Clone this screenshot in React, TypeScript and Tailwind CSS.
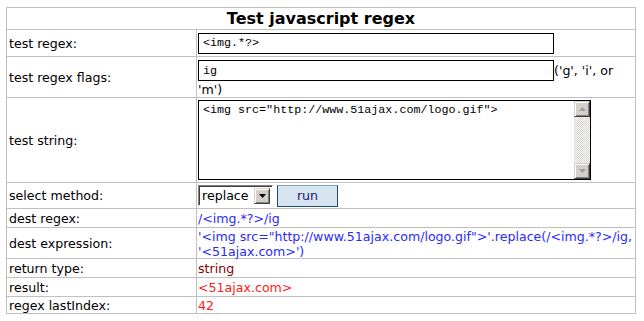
import React from "react"

// classic win-style 3d button face
const bevel =
  "bg-[#d4d0c8] border border-t-[#d4d0c8] border-l-[#d4d0c8] border-r-[#404040] border-b-[#404040] shadow-[inset_1px_1px_0_#fff,inset_-1px_-1px_0_#808080]"

function Row({ label, h, children, valueClass = "" }: { label: string; h: string; children: React.ReactNode; valueClass?: string }) {
  return (
    <div className={`flex ${h}`}>
      <div className="w-[190px] shrink-0 border-r border-b border-[#c0c0c0] flex items-center pl-[2px]">{label}</div>
      <div className={`flex-1 border-r border-b border-[#c0c0c0] pl-[1px] ${valueClass}`}>{children}</div>
    </div>
  )
}

function Arrow({ dir }: { dir: "up" | "down" }) {
  return (
    <div className={`w-[16px] h-[16px] ${bevel} flex items-center justify-center`}>
      <svg width="7" height="4" viewBox="0 0 7 4">
        {dir === "up" ? <polygon points="3.5,0 7,4 0,4" fill="#a0a0a0" /> : <polygon points="0,0 7,0 3.5,4" fill="#a0a0a0" />}
      </svg>
    </div>
  )
}

export default function App() {
  return (
    <div className="w-[644px] h-[321px] bg-white pt-[7px] pl-[6px] text-black text-[12.6px] leading-[15px] font-['DejaVu_Sans','Liberation_Sans',sans-serif]">
      <div className="w-[630px] border-t border-l border-[#c0c0c0]">
        <div className="h-[22px] border-r border-b border-[#c0c0c0] flex items-center justify-center font-bold text-[16px]">
          Test javascript regex
        </div>

        <Row label="test regex:" h="h-[27px]" valueClass="flex items-center">
          <input
            defaultValue="<img.*?>"
            className="w-[356px] h-[21px] border border-black px-[4px] font-['Liberation_Mono',monospace] text-[11.7px] outline-none"
          />
        </Row>

        <Row label="test regex flags:" h="h-[41px]" valueClass="pt-[3px]">
          <input
            defaultValue="ig"
            className="w-[356px] h-[21px] border border-black px-[4px] font-['Liberation_Mono',monospace] text-[11.7px] outline-none align-middle"
          />
          <span className="align-middle">('g', 'i', or 'm')</span>
        </Row>

        <Row label="test string:" h="h-[85px]" valueClass="flex items-center">
          <div className="w-[393px] h-[80px] border border-black flex">
            <textarea
              defaultValue={'<img src="http://www.51ajax.com/logo.gif">'}
              className="flex-1 resize-none overflow-hidden outline-none px-[4px] pt-[2px] font-['Liberation_Mono',monospace] text-[11.7px] leading-[14px]"
            />
            <div className="w-[16px] flex flex-col">
              <Arrow dir="up" />
              <div className="flex-1 bg-[repeating-conic-gradient(#d4d0c8_0_25%,#ffffff_0_50%)] bg-[length:2px_2px]" />
              <Arrow dir="down" />
            </div>
          </div>
        </Row>

        <Row label="select method:" h="h-[26px]" valueClass="flex items-center gap-[4px]">
          <div className="w-[75px] h-[21px] border border-t-[#808080] border-l-[#808080] border-r-white border-b-white shadow-[inset_1px_1px_0_#404040] flex items-center pl-[3px] pr-[2px] py-[2px]">
            <span className="flex-1">replace</span>
            <div className={`w-[16px] h-[16px] ${bevel} flex items-center justify-center`}>
              <svg width="7" height="4" viewBox="0 0 7 4">
                <polygon points="0,0 7,0 3.5,4" fill="#000" />
              </svg>
            </div>
          </div>
          <button className="w-[61px] h-[22px] bg-[#d6e4ef] border border-[#1f4a73] border-t-[#7f9db8] text-[#1a1a6e] flex items-center justify-center">
            run
          </button>
        </Row>

        <Row label="dest regex:" h="h-[19px]" valueClass="flex items-center text-[#2a2aff]">
          /&lt;img.*?&gt;/ig
        </Row>

        <Row label="dest expression:" h="h-[31px]" valueClass="text-[#2a2aff] pt-[1px]">
          '&lt;img src="http://www.51ajax.com/logo.gif"&gt;'.replace(/&lt;img.*?&gt;/ig, '&lt;51ajax.com&gt;')
        </Row>

        <Row label="return type:" h="h-[19px]" valueClass="flex items-center text-[#8b0000]">
          string
        </Row>

        <Row label="result:" h="h-[19px]" valueClass="flex items-center text-[#ff2020]">
          &lt;51ajax.com&gt;
        </Row>

        <Row label="regex lastIndex:" h="h-[17px]" valueClass="flex items-center text-[#ff2020]">
          42
        </Row>
      </div>
    </div>
  )
}
